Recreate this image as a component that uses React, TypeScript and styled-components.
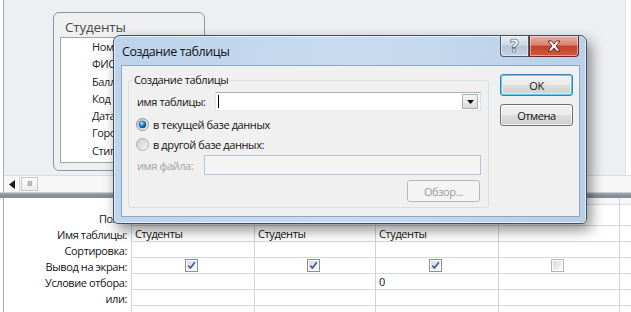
import React from "react";
import styled, { createGlobalStyle } from "styled-components";

const Global = createGlobalStyle`
  html, body { margin: 0; padding: 0; }
  body {
    width: 631px; height: 312px; overflow: hidden; background: #fff;
    font-family: "Open Sans", "Noto Sans", sans-serif; font-size: 11px; letter-spacing: -0.4px; color: #141414;
  }
  * { box-sizing: border-box; }
`;

const Screen = styled.div`
  position: relative;
  width: 631px;
  height: 312px;
  overflow: hidden;
  display: flex;
  flex-direction: column;
  background: #fff;
`;

const DesignPane = styled.div`
  position: relative;
  flex: none;
  height: 175px;
  margin-left: 3px;
  border-left: 1px solid #a9aeb5;
  border-right: 1px solid #dfe2e6;
  margin-right: 5px;
  background: #edeff2;
`;

const TableBox = styled.div`
  position: absolute;
  left: 49px;
  top: 12px;
  width: 152px;
  height: 159px;
  border: 1px solid #8e959d;
  border-radius: 6px;
  background: #eef0f2;
  padding: 4px 5px 7px 6px;
  display: flex;
  flex-direction: column;
`;

const TableTitle = styled.div`
  font-size: 13.5px;
  letter-spacing: -0.2px;
  line-height: 20px;
  color: #4a4a4a;
  padding-left: 5px;
`;

const FieldList = styled.div`
  flex: 1;
  background: #fff;
  border: 1px solid #9ea3a8;
  padding: 0 0 0 31px;
`;

const FieldItem = styled.div`
  height: 17.3px;
  line-height: 17px;
  white-space: nowrap;
  color: #222;
`;

const HScroll = styled.div`
  flex: none;
  height: 17px;
  margin-left: 3px;
  border-left: 1px solid #a9aeb5;
  border-top: 1px solid #d9dce0;
  background: #f7f7f7;
  display: flex;
  align-items: stretch;
`;

const ScrollArrow = styled.div`
  width: 16px;
  display: flex;
  align-items: center;
  justify-content: center;
  border-right: 1px solid #d6d6d6;
`;

const ScrollThumb = styled.div`
  width: 17px;
  margin: 1px 0 1px 1px;
  border: 1px solid #c8c8c8;
  background: linear-gradient(#fbfbfb, #ececec);
  display: flex;
  align-items: center;
  justify-content: center;
  font-size: 7px;
  color: #777;
  letter-spacing: -0.5px;
  font-family: "DejaVu Sans", sans-serif;
`;

const Splitter = styled.div`
  flex: none;
  height: 6px;
  background: linear-gradient(#aab0ba 0%, #8a909b 40%, #858b96 100%);
  border-top: 1px solid #c9ced6;
`;

const Grid = styled.div`
  flex: 1;
  min-height: 0;
  overflow: hidden;
  margin-left: 3px;
  border-left: 1px solid #a9aeb5;
  display: grid;
  grid-template-columns: 127px 123px 121px 123px 121px 1fr;
  grid-auto-rows: 16px;
  grid-template-rows: 7px 21px;
  align-content: start;
  background: #fff;
`;

const LabelCell = styled.div`
  text-align: right;
  padding-right: 4px;
  line-height: 15px;
  white-space: nowrap;
  display: flex;
  align-items: flex-end;
  justify-content: flex-end;
`;

const DataCell = styled.div<{ $selector?: boolean }>`
  border-left: 1px solid #cfd3d8;
  border-bottom: 1px solid ${(p) => (p.$selector ? "#d9dce0" : "#d4d7dc")};
  background: ${(p) => (p.$selector ? "#f7f7f8" : "#fff")};
  padding-left: 3px;
  line-height: 15px;
  white-space: nowrap;
  display: flex;
  align-items: center;
`;

const CheckCell = styled(DataCell)`
  justify-content: center;
  padding-left: 0;
  padding-right: 3px;
`;

const Dialog = styled.div`
  position: absolute;
  left: 113px;
  top: 35px;
  width: 474px;
  height: 189px;
  border: 1px solid #3e4f66;
  border-radius: 7px 7px 5px 5px;
  background: linear-gradient(100deg, #bdd3ec 0%, #c8dbf0 50%, #b9cfe8 100%);
  box-shadow: 4px 6px 14px rgba(0, 0, 0, 0.45), inset 0 0 0 1px rgba(255, 255, 255, 0.6);
  display: flex;
  flex-direction: column;
  padding: 0 6px 6px 7px;
`;

const TitleBar = styled.div`
  height: 29px;
  display: flex;
  align-items: flex-start;
`;

const TitleText = styled.div`
  flex: 1;
  padding: 8px 0 0 1px;
  font-size: 12.5px;
  letter-spacing: -0.45px;
  line-height: 16px;
  color: #111;
`;

const CaptionButton = styled.div<{ $close?: boolean }>`
  width: ${(p) => (p.$close ? "50px" : "29px")};
  height: 21px;
  display: flex;
  align-items: center;
  justify-content: center;
  border: 1px solid ${(p) => (p.$close ? "#6b2a20" : "#4b5a6f")};
  border-top: none;
  border-radius: ${(p) => (p.$close ? "0 0 4px 0" : "0 0 0 4px")};
  margin-right: ${(p) => (p.$close ? "1px" : "0")};
  background: ${(p) =>
    p.$close
      ? "linear-gradient(#e8b0a4 0%, #d9806c 45%, #c4402a 52%, #cf5a3f 100%)"
      : "linear-gradient(#e3ebf4 0%, #cbd7e5 45%, #b5c5d8 52%, #c5d4e6 100%)"};
  box-shadow: inset 0 0 0 1px rgba(255, 255, 255, 0.45);
`;

const HelpGlyph = styled.span`
  font-family: "DejaVu Sans", sans-serif;
  font-weight: bold;
  font-size: 17px;
  line-height: 17px;
  letter-spacing: 0;
  color: #f6f8fb;
  -webkit-text-stroke: 0.6px #44556d;
`;

const Client = styled.div`
  flex: 1;
  border: 1px solid #8fa4bf;
  background: #f0f0f0;
  display: flex;
  align-items: flex-start;
  padding: 7px 0 0 6px;
`;

const Group = styled.fieldset`
  margin: 0;
  width: 361px;
  border: 1px solid #d5dfe5;
  border-radius: 3px;
  padding: 5px 7px 5px 8px;
  display: flex;
  flex-direction: column;
  min-width: 0;
`;

const GroupLegend = styled.legend`
  padding: 0 2px;
  margin-left: -5px;
  line-height: 14px;
`;

const Row = styled.div<{ $top?: number }>`
  display: flex;
  align-items: center;
  margin-top: ${(p) => p.$top ?? 0}px;
`;

const FieldLabel = styled.div<{ $w: number; $disabled?: boolean }>`
  width: ${(p) => p.$w}px;
  flex: none;
  white-space: nowrap;
  color: ${(p) => (p.$disabled ? "#a3a3a3" : "#141414")};
`;

const Combo = styled.div`
  flex: 1;
  height: 19px;
  background: #fff;
  border: 1px solid #abadb3;
  border-color: #abadb3 #dbdfe6 #e3e9ef #e2e3ea;
  display: flex;
  align-items: center;
  padding: 0 2px 0 2px;
`;

const Caret = styled.div`
  width: 1px;
  height: 13px;
  background: #000;
`;

const ComboValue = styled.div`
  flex: 1;
`;

const DropButton = styled.div`
  width: 16px;
  height: 15px;
  border: 1px solid #a7aeb6;
  background: linear-gradient(#f5f5f5, #dcdcdc);
  display: flex;
  align-items: center;
  justify-content: center;
`;

const RadioRow = styled.label<{ $top: number }>`
  display: flex;
  align-items: center;
  gap: 4px;
  height: 16px;
  margin-top: ${(p) => p.$top}px;
  margin-left: -1px;
  white-space: nowrap;
`;

const FileInput = styled.div`
  flex: 1;
  height: 20px;
  border: 1px solid #b3c5da;
  background: #f4f4f4;
`;

const Button = styled.div<{ $default?: boolean; $disabled?: boolean }>`
  width: 73px;
  height: 22px;
  border-radius: 3px;
  display: flex;
  align-items: center;
  justify-content: center;
  border: 1px solid ${(p) => (p.$default ? "#3c7fb1" : p.$disabled ? "#b5b9bc" : "#707070")};
  background: ${(p) =>
    p.$disabled
      ? "#f4f4f4"
      : "linear-gradient(#f2f2f2 0%, #ebebeb 48%, #dddddd 52%, #cfcfcf 100%)"};
  box-shadow: ${(p) =>
    p.$default
      ? "inset 0 0 0 1px #5fc6f2, inset 0 0 0 2px rgba(255,255,255,0.5)"
      : p.$disabled
      ? "none"
      : "inset 0 0 0 1px rgba(255,255,255,0.7)"};
  color: ${(p) => (p.$disabled ? "#9a9a9a" : "#141414")};
`;

const BrowseRow = styled.div`
  display: flex;
  justify-content: flex-end;
  margin-top: 5px;
  padding-right: 1px;
`;

const ButtonColumn = styled.div`
  margin-left: 11px;
  padding-top: 1px;
  display: flex;
  flex-direction: column;
  gap: 8px;
`;

const Radio = ({ checked }: { checked?: boolean }) => (
  <svg width="13" height="13" viewBox="0 0 13 13">
    <defs>
      <linearGradient id={checked ? "rOn" : "rOff"} x1="0" y1="0" x2="1" y2="1">
        <stop offset="0" stopColor="#c9c9c9" />
        <stop offset="1" stopColor="#fafafa" />
      </linearGradient>
      <radialGradient id="rDot" cx="0.38" cy="0.32" r="0.7">
        <stop offset="0" stopColor="#c8ecff" />
        <stop offset="0.45" stopColor="#2a95d8" />
        <stop offset="1" stopColor="#0b3f7e" />
      </radialGradient>
    </defs>
    <circle cx="6.5" cy="6.5" r="6" fill={`url(#${checked ? "rOn" : "rOff"})`} stroke={checked ? "#8e9296" : "#a9adb1"} />
    {checked && <circle cx="6.5" cy="6.5" r="3.6" fill="url(#rDot)" stroke="#1c4f86" strokeWidth="0.5" />}
  </svg>
);

const Check = ({ checked }: { checked?: boolean }) => (
  <svg width="13" height="13" viewBox="0 0 13 13">
    <defs>
      <linearGradient id="cbF" x1="0" y1="0" x2="1" y2="1">
        <stop offset="0" stopColor="#d6d9de" />
        <stop offset="1" stopColor="#fbfbfb" />
      </linearGradient>
    </defs>
    <rect x="0.5" y="0.5" width="12" height="12" fill="#fff" stroke={checked ? "#8f8f8f" : "#b4b4b4"} />
    <rect x="2" y="2" width="9" height="9" fill="url(#cbF)" />
    {checked && (
      <path d="M3.3 6.6 L5.4 9 L9.8 3.2" fill="none" stroke="#3e5c9e" strokeWidth="1.7" strokeLinejoin="round" />
    )}
  </svg>
);

const fields = ["Номер", "ФИО", "Балл", "Код", "Дата рождения", "Город", "Стипендия"];

type GridRow = { label: string; cells?: string[]; checks?: boolean[] };
const gridRows: GridRow[] = [
  { label: "Поле:", cells: ["", "", "", "", ""] },
  { label: "Имя таблицы:", cells: ["Студенты", "Студенты", "Студенты", "", ""] },
  { label: "Сортировка:", cells: ["", "", "", "", ""] },
  { label: "Вывод на экран:", checks: [true, true, true, false] },
  { label: "Условие отбора:", cells: ["", "", "0", "", ""] },
  { label: "или:", cells: ["", "", "", "", ""] },
  { label: "", cells: ["", "", "", "", ""] },
];

export default function App() {
  return (
    <>
      <Global />
      <Screen>
        <DesignPane>
          <TableBox>
            <TableTitle>Студенты</TableTitle>
            <FieldList>
              {fields.map((f) => (
                <FieldItem key={f}>{f}</FieldItem>
              ))}
            </FieldList>
          </TableBox>
        </DesignPane>
        <HScroll>
          <ScrollArrow>
            <svg width="6" height="9" viewBox="0 0 6 9">
              <path d="M6 0 L0 4.5 L6 9 Z" fill="#1a1a1a" />
            </svg>
          </ScrollArrow>
          <ScrollThumb>III</ScrollThumb>
        </HScroll>
        <Splitter />
        <Grid>
          <LabelCell />
          {[0, 1, 2, 3, 4].map((i) => (
            <DataCell key={"s" + i} $selector />
          ))}
          {gridRows.map((r, ri) => (
            <React.Fragment key={ri}>
              <LabelCell>{r.label}</LabelCell>
              {r.checks
                ? [...r.checks.map((c, ci) => (
                    <CheckCell key={ci}>
                      <Check checked={c} />
                    </CheckCell>
                  )), <DataCell key="x" />]
                : r.cells!.map((c, ci) => <DataCell key={ci}>{c}</DataCell>)}
            </React.Fragment>
          ))}
        </Grid>

        <Dialog>
          <TitleBar>
            <TitleText>Создание таблицы</TitleText>
            <CaptionButton>
              <HelpGlyph>?</HelpGlyph>
            </CaptionButton>
            <CaptionButton $close>
              <svg width="14" height="12" viewBox="0 0 14 12">
                <path
                  d="M1 1 L4.5 1 L7 4 L9.5 1 L13 1 L9 6 L13 11 L9.5 11 L7 8 L4.5 11 L1 11 L5 6 Z"
                  fill="#fff"
                  stroke="#5a2118"
                  strokeWidth="0.9"
                  strokeLinejoin="round"
                />
              </svg>
            </CaptionButton>
          </TitleBar>
          <Client>
            <Group>
              <GroupLegend>Создание таблицы</GroupLegend>
              <Row>
                <FieldLabel $w={78}>имя таблицы:</FieldLabel>
                <Combo>
                  <Caret />
                  <ComboValue />
                  <DropButton>
                    <svg width="7" height="4" viewBox="0 0 7 4">
                      <path d="M0 0 L7 0 L3.5 4 Z" fill="#111" />
                    </svg>
                  </DropButton>
                </Combo>
              </Row>
              <RadioRow $top={5}>
                <Radio checked />
                в текущей базе данных
              </RadioRow>
              <RadioRow $top={4}>
                <Radio />
                в другой базе данных:
              </RadioRow>
              <Row $top={3}>
                <FieldLabel $w={67} $disabled>
                  имя файла:
                </FieldLabel>
                <FileInput />
              </Row>
              <BrowseRow>
                <Button $disabled>Обзор...</Button>
              </BrowseRow>
            </Group>
            <ButtonColumn>
              <Button $default>OK</Button>
              <Button>Отмена</Button>
            </ButtonColumn>
          </Client>
        </Dialog>
      </Screen>
    </>
  );
}
